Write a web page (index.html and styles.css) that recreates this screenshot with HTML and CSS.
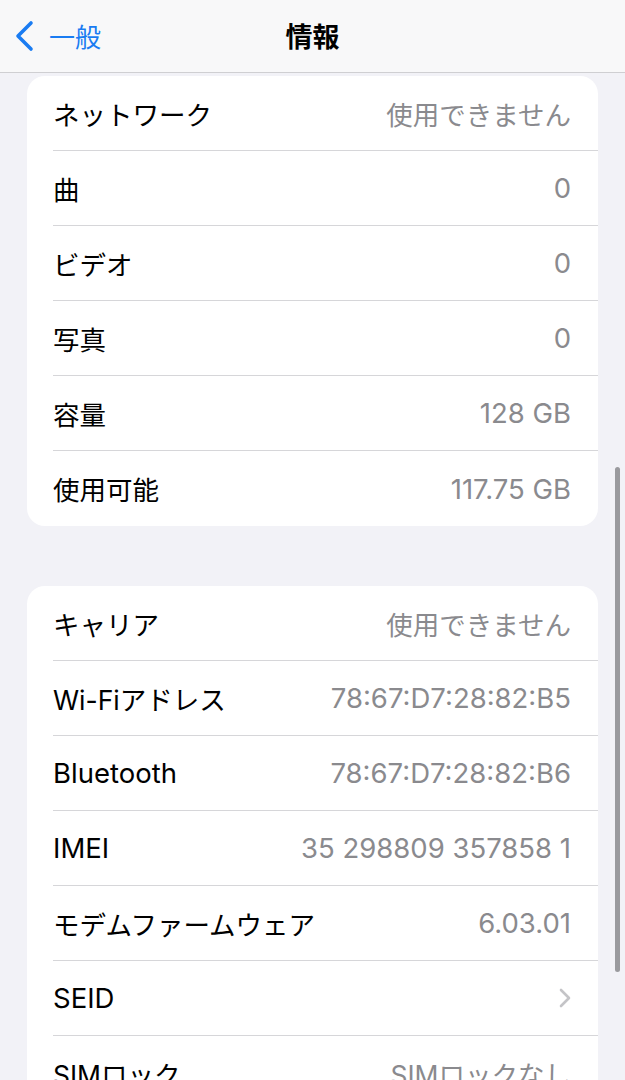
FILE: index.html
```html
<!DOCTYPE html>
<html lang="ja">
<head>
<meta charset="utf-8">
<title>情報</title>
<link rel="stylesheet" href="styles.css">
</head>
<body>
<div class="screen">
  <header class="nav">
    <div class="back">
      <svg class="back-icon" width="22" height="32" viewBox="0 0 22 32"><path d="M18 3 L5 16 L18 29" fill="none" stroke="#1a7cf2" stroke-width="3.6" stroke-linecap="round" stroke-linejoin="round"/></svg>
      <span class="back-label">一般</span>
    </div>
    <div class="title">情報</div>
  </header>
  <main class="content">
    <section class="card">
      <div class="row"><span class="label">ネットワーク</span><span class="value">使用できません</span></div>
      <div class="row"><span class="label">曲</span><span class="value num">0</span></div>
      <div class="row"><span class="label">ビデオ</span><span class="value num">0</span></div>
      <div class="row"><span class="label">写真</span><span class="value num">0</span></div>
      <div class="row"><span class="label">容量</span><span class="value num">128 GB</span></div>
      <div class="row"><span class="label">使用可能</span><span class="value num">117.75 GB</span></div>
    </section>
    <section class="card">
      <div class="row"><span class="label">キャリア</span><span class="value">使用できません</span></div>
      <div class="row"><span class="label">Wi-Fiアドレス</span><span class="value num">78:67:D7:28:82:B5</span></div>
      <div class="row"><span class="label num">Bluetooth</span><span class="value num">78:67:D7:28:82:B6</span></div>
      <div class="row"><span class="label num">IMEI</span><span class="value num">35 298809 357858 1</span></div>
      <div class="row"><span class="label">モデムファームウェア</span><span class="value num">6.03.01</span></div>
      <div class="row"><span class="label num">SEID</span><svg class="chev" width="14" height="22" viewBox="0 0 14 22"><path d="M3 3 L11 11 L3 19" fill="none" stroke="#c4c4c7" stroke-width="2.6" stroke-linecap="round" stroke-linejoin="round"/></svg></div>
      <div class="row"><span class="label">SIMロック</span><span class="value">SIMロックなし</span></div>
    </section>
  </main>
  <div class="scrollbar"></div>
</div>
</body>
</html>
```

FILE: styles.css
```css
html, body {
  margin: 0;
  padding: 0;
  background: #f2f2f7;
}
body {
  font-family: Inter, "Noto Sans CJK JP", sans-serif;
  color: #000;
}
.screen {
  position: relative;
  width: 625px;
  height: 1080px;
  overflow: hidden;
  background: #f2f2f7;
}
.nav {
  position: relative;
  height: 73px;
  background: #f8f8f9;
  border-bottom: 1px solid #cfcfd2;
  display: flex;
  align-items: center;
  justify-content: center;
  box-sizing: border-box;
}
.back {
  position: absolute;
  left: 13px;
  top: 0;
  height: 73px;
  display: flex;
  align-items: center;
  gap: 14px;
  color: #1a7cf2;
}
.back-icon {
  display: block;
  margin-top: -2px;
}
.back-label {
  font-size: 26px;
  font-family: "Noto Sans CJK JP", sans-serif;
  margin-top: -2px;
}
.title {
  font-size: 27px;
  font-weight: 700;
  font-family: "Noto Sans CJK JP", sans-serif;
  margin-top: -2px;
}
.content {
  display: flex;
  flex-direction: column;
  gap: 60px;
  padding: 3px 27px 0 27px;
}
.card {
  background: #fff;
  border-radius: 18px;
  overflow: hidden;
}
.row {
  height: 75px;
  margin-left: 26px;
  padding-right: 27px;
  display: flex;
  align-items: center;
  justify-content: space-between;
  box-sizing: border-box;
  border-bottom: 1px solid #d6d6d9;
  font-size: 26.5px;
}
.row:last-child {
  border-bottom: none;
}
.num {
  font-size: 27.5px;
}
.label {
  color: #000;
}
.value {
  color: #8a8a8e;
}
.chev {
  display: block;
  margin-right: -1px;
}
.scrollbar {
  position: absolute;
  left: 615px;
  top: 467px;
  width: 5px;
  height: 505px;
  border-radius: 3px;
  background: #9a9a9e;
}
```
